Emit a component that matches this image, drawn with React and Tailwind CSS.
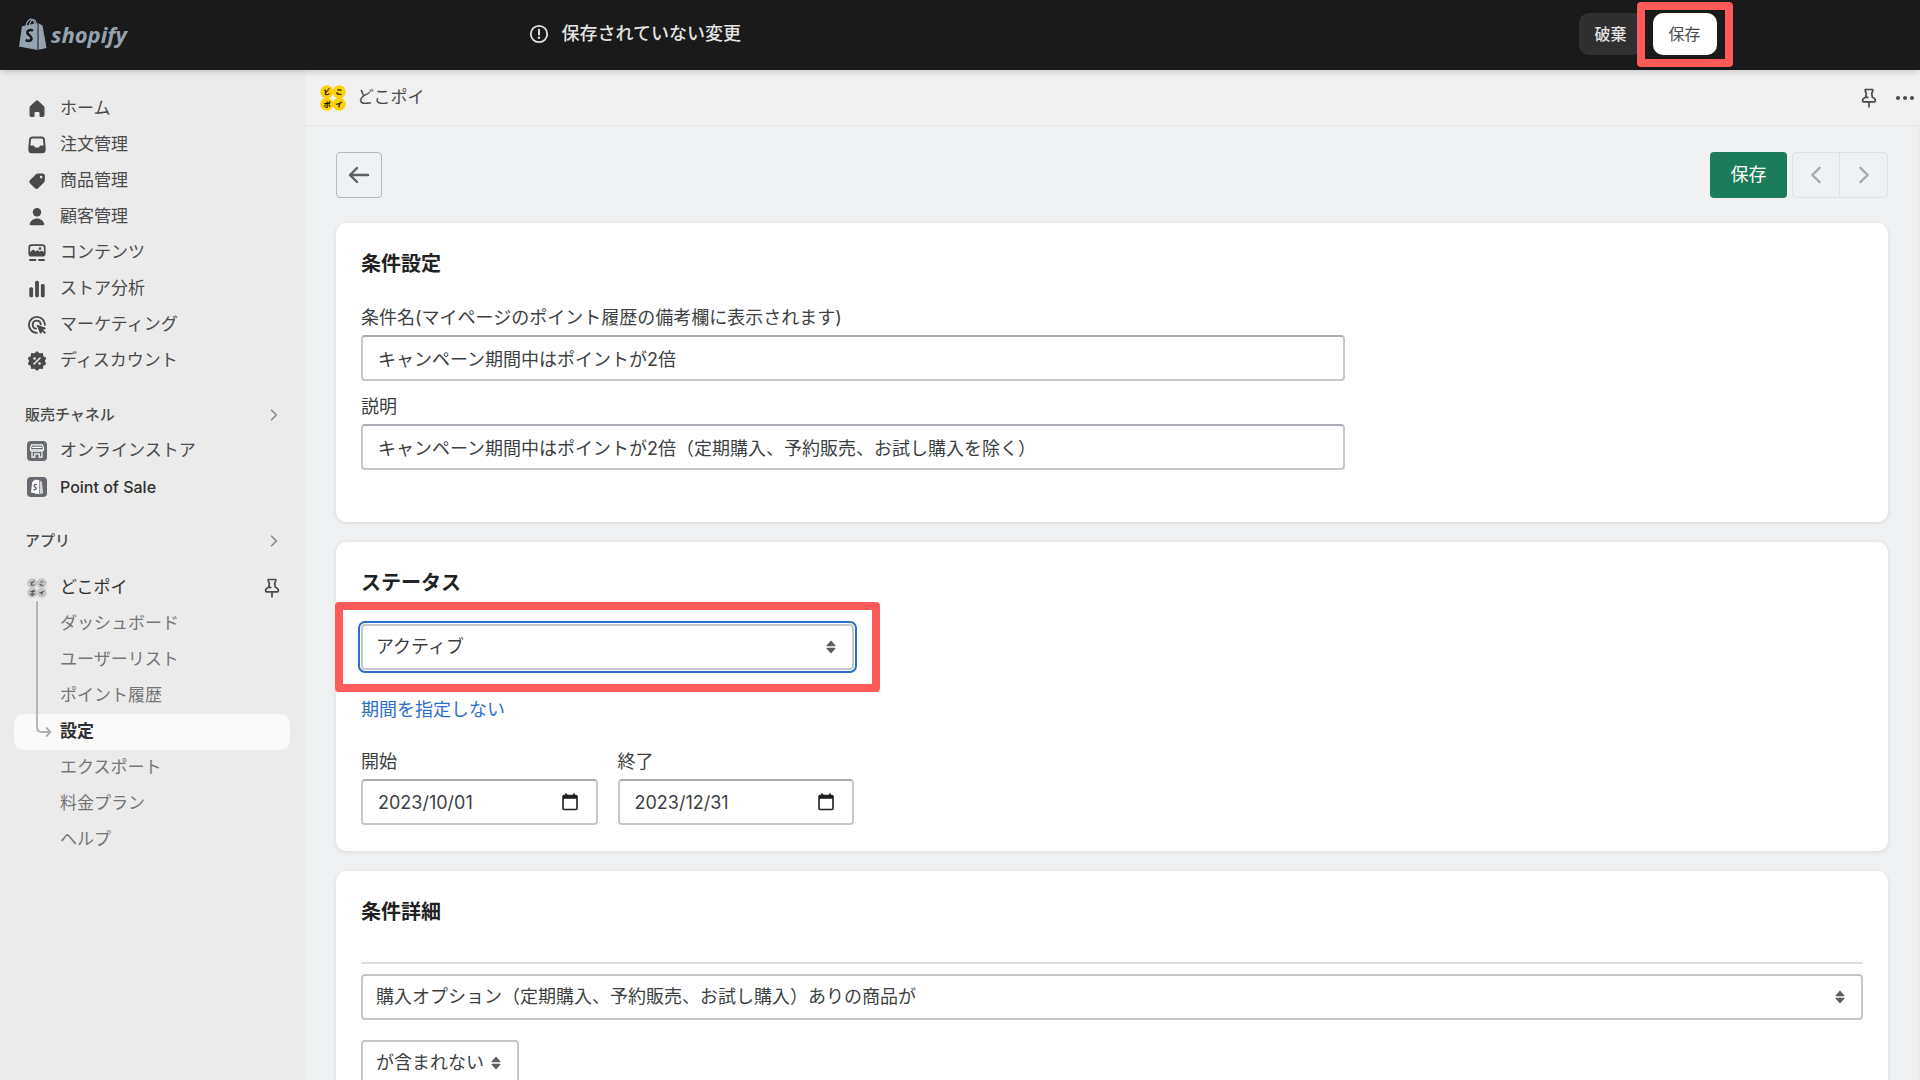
import React, { useState } from "react";

const iconClass = "w-5 h-5 shrink-0 text-[#4a4a4a]";

function HomeIcon() {
    return (
        <svg viewBox="0 0 20 20" className={iconClass} fill="currentColor" aria-hidden="true">
            <path d="M8.700 1.900a1.900 1.900 0 0 1 2.600 0l5.200 4.900a3.200 3.200 0 0 1 1 2.300v6.300a2.600 2.600 0 0 1-2.600 2.600h-1.400a1 1 0 0 1-1-1v-3a1 1 0 0 0-1-1h-3a1 1 0 0 0-1 1v3a1 1 0 0 1-1 1H5.100a2.600 2.600 0 0 1-2.600-2.600V9.100a3.200 3.200 0 0 1 1-2.300z" />
        </svg>
    );
}

function OrderIcon() {
    return (
        <svg viewBox="0 0 20 20" className={iconClass} fill="currentColor" aria-hidden="true">
            <path fillRule="evenodd" d="M5 1.600h10a3 3 0 0 1 2.900 2.500l.7 8V15a3.200 3.200 0 0 1-3.200 3.200H4.600A3.200 3.200 0 0 1 1.400 15v-2.900l.7-8A3 3 0 0 1 5 1.600zm.3 1.900a1.300 1.300 0 0 0-1.300 1.200L3.400 10.400h2.800c.5 0 .9.300 1.100.7l.4.900c.2.400.5.600.9.600h2.800c.4 0 .7-.2.900-.6l.4-.9c.2-.4.6-.7 1.100-.7h2.800L16 4.700a1.300 1.300 0 0 0-1.300-1.200z" />
        </svg>
    );
}

function TagIcon() {
    return (
        <svg viewBox="0 0 20 20" className={iconClass} fill="currentColor" aria-hidden="true">
            <path fillRule="evenodd" d="M11.200 2.500h4A2.600 2.600 0 0 1 17.900 5.100v4a3.400 3.400 0 0 1-1 2.400l-5.500 5.500a2.600 2.600 0 0 1-3.700 0l-4.600-4.600a2.400 2.400 0 0 1 0-3.500l5.600-5.400a3.400 3.400 0 0 1 2.500-1zm3 4.900a1.300 1.300 0 1 0 0-2.600 1.300 1.300 0 0 0 0 2.600z" />
        </svg>
    );
}

function PersonIcon() {
    return (
        <svg viewBox="0 0 20 20" className={iconClass} fill="currentColor" aria-hidden="true">
            <circle cx="10" cy="5.300" r="4.200" />
            <path d="M3.600 18.200c-.6 0-1-.5-.9-1.100C3.300 13.700 6.300 11.400 10 11.400s6.700 2.300 7.300 5.700c.1.600-.3 1.100-.9 1.100z" />
        </svg>
    );
}

function ContentIcon() {
    return (
        <svg viewBox="0 0 20 20" className={iconClass} fill="currentColor" aria-hidden="true">
            <path fillRule="evenodd" d="M4.600 1.200h10.800A3.200 3.200 0 0 1 18.600 4.400v6A3.200 3.200 0 0 1 15.400 13.600H4.600A3.200 3.200 0 0 1 1.400 10.400v-6A3.200 3.200 0 0 1 4.600 1.200zm.2 1.700a1.700 1.700 0 0 0-1.700 1.700v4.700l2.300-2.200c.5-.5 1.200-.5 1.700 0l1.500 1.500 1-.9c.6-.5 1.400-.5 1.900 0l1.200 1.100 1-.8c.5-.4 1.200-.4 1.700 0l1.500 1.300V4.600a1.700 1.700 0 0 0-1.700-1.700zm8.200 1.300a1.400 1.400 0 1 1 0 2.800 1.400 1.400 0 0 1 0-2.800z" />
            <rect x="2" y="16" width="7.500" height="2" rx="1" />
            <rect x="11" y="16" width="7" height="2" rx="1" />
        </svg>
    );
}

function AnalyticsIcon() {
    return (
        <svg viewBox="0 0 20 20" className={iconClass} fill="currentColor" aria-hidden="true">
            <rect x="2.300" y="8.300" width="3.800" height="10" rx="1.500" />
            <rect x="8.100" y="1.700" width="3.800" height="16.600" rx="1.500" />
            <rect x="13.900" y="5" width="3.800" height="13.300" rx="1.500" />
        </svg>
    );
}

function MarketingIcon() {
    return (
        <svg viewBox="0 0 20 20" className={iconClass} fill="none" stroke="currentColor" strokeWidth="1.900" strokeLinecap="round" aria-hidden="true">
            <path d="M17.900 9.800A8 8 0 1 0 9.800 17.900" />
            <path d="M13.700 9.300A4 4 0 1 0 9 13.600" />
            <path d="M10.200 10.200l8.800 3-3.200 1.300 3.200 3.200-1.300 1.300-3.200-3.200-1.300 3.200z" fill="currentColor" stroke="none" />
            <path d="M10.400 10.400l8 2.900-3 1.400-1.200 3.200z" fill="currentColor" strokeWidth="1" strokeLinejoin="round" />
        </svg>
    );
}

function DiscountIcon() {
    return (
        <svg viewBox="0 0 20 20" className={iconClass} aria-hidden="true">
            <path fill="currentColor" stroke="currentColor" strokeWidth="1.600" strokeLinejoin="round" d="M10 1.200l2.200 2 3-.4.400 2.900 2.700 1.400-1.300 2.900 1.300 2.900-2.700 1.400-.4 2.900-3-.4-2.200 2-2.200-2-3 .4-.4-2.900-2.700-1.400L3 10 1.700 7.100l2.700-1.400.4-2.900 3 .4z" />
            <path d="M7 13l6-6" stroke="#ebebeb" strokeWidth="1.600" strokeLinecap="round" />
            <circle cx="7.500" cy="7.500" r="1.300" fill="#ebebeb" />
            <circle cx="12.500" cy="12.500" r="1.300" fill="#ebebeb" />
        </svg>
    );
}

function StoreIcon() {
    return (
        <svg viewBox="0 0 20 20" className={iconClass} aria-hidden="true">
            <rect width="20" height="20" rx="4" fill="#66696d" />
            <path d="M4.500 3.800h11l1 3.600v1.400H3.500V7.400z" fill="none" stroke="#fff" strokeWidth="1.200" strokeLinejoin="round" />
            <path d="M5.200 6.300h9.600M3.800 9.200c0 1.600 2.900 1.600 3.100 0 .2 1.600 2.900 1.600 3.100 0 .2 1.600 2.900 1.600 3.100 0 .2 1.600 3.100 1.600 3.100 0M5 11.200v4.900h2.800v-3.200h4.400v3.200H15v-4.900" fill="none" stroke="#fff" strokeWidth="1.200" />
        </svg>
    );
}

function PosIcon() {
    return (
        <svg viewBox="0 0 20 20" className={iconClass} aria-hidden="true">
            <rect width="20" height="20" rx="4" fill="#66696d" />
            <path d="M5.200 5.200C7 2.800 8.500 2.600 10 2.800l2.300.4v14L4 15.600z" fill="#fff" />
            <path d="M13 3.500l1.900 1.500 1.300 11.200-3.200.9z" fill="#d5d6d8" />
            <path d="M10.100 7.700c-1.900-.8-3.200.2-2.900 1.300.3 1.200 2 1.200 2 2.600 0 1.200-1.500 1.500-2.700.6" fill="none" stroke="#66696d" strokeWidth="1.400" />
        </svg>
    );
}

function ChevronIcon({ left, className }) {
    return (
        <svg viewBox="0 0 20 20" className={className} fill="none" stroke="currentColor" strokeWidth="2" strokeLinecap="round" strokeLinejoin="round" aria-hidden="true">
            <path d={left ? "M13 4l-6 6 6 6" : "M7 4l6 6-6 6"} />
        </svg>
    );
}

function PinIcon() {
    return (
        <svg viewBox="0 0 20 20" className="w-5 h-5 shrink-0 text-[#4a4a4a]" fill="none" stroke="currentColor" strokeWidth="1.700" strokeLinecap="round" strokeLinejoin="round" aria-hidden="true">
            <path d="M6.200 1.500h7.600M6.400 1.600v2.200c0 .5.900.8.900 1.500L6.700 9.200c-1.900.6-3.100 1.700-3.100 3.500 0 .8.400 1.100 1.100 1.100h10.600c.7 0 1.100-.3 1.100-1.100 0-1.800-1.200-2.900-3.100-3.500l-.6-3.900c0-.7.900-1 .9-1.500V1.600M10 14v4.800M6.700 9.400h2" />
        </svg>
    );
}

// Quatre jetons avec les lettres de l'application
function DokopoiLogo({ gray, className }) {
    const fill = gray ? "#c6c6c6" : "#fdd008";
    const ink = gray ? "#444" : "#1c1503";
    return (
        <svg viewBox="0 0 26 26" className={className} aria-hidden="true">
            <circle cx="6.800" cy="6.800" r="6.500" fill={fill} />
            <circle cx="19.200" cy="6.800" r="6.500" fill={fill} />
            <circle cx="6.800" cy="19.200" r="6.500" fill={fill} />
            <circle cx="19.200" cy="19.200" r="6.500" fill={fill} />
            <g fill={ink} fontSize="7" fontWeight="900" textAnchor="middle">
                <text x="7" y="9.500" transform="rotate(-12 7 7)">ど</text>
                <text x="19" y="9.500" transform="rotate(8 19 7)">こ</text>
                <text x="7" y="22">ポ</text>
                <text x="19" y="22" transform="rotate(8 19 19)">イ</text>
            </g>
        </svg>
    );
}

function ShopifyLogo() {
    return (
        <a href="#home" aria-label="shopify" className="flex items-center gap-1 text-[#95a3b1]">
            <svg viewBox="0 0 28 32" className="w-7 h-8" aria-hidden="true">
                <path d="M3 8.300L18.500 5v27L0 28.500z" fill="currentColor" />
                <path d="M19.500 5.300l4 2.200L27.500 30l-8 1.800z" fill="currentColor" />
                <path d="M7 8c.5-3.800 2.800-6.800 5-6.800 2.400 0 3.300 2.400 3.500 5M10.500 7c.5-3 2-5.200 3.700-5.200 1.800 0 2.800 1.500 3.200 4" fill="none" stroke="currentColor" strokeWidth="1.200" />
                <path d="M14 12.600c-3.400-1.500-6 .3-5.500 2.500.5 2.100 4 2.400 4 5.200 0 2.800-3 3.300-5.800 1.500" fill="none" stroke="#1a1a1a" strokeWidth="2.600" />
            </svg>
            <span className="font-['Open_Sans'] text-[22px] font-bold italic leading-8">shopify</span>
        </a>
    );
}

const mainLinks = [
    { label: "ホーム", Icon: HomeIcon },
    { label: "注文管理", Icon: OrderIcon },
    { label: "商品管理", Icon: TagIcon },
    { label: "顧客管理", Icon: PersonIcon },
    { label: "コンテンツ", Icon: ContentIcon },
    { label: "ストア分析", Icon: AnalyticsIcon },
    { label: "マーケティング", Icon: MarketingIcon },
    { label: "ディスカウント", Icon: DiscountIcon },
];

const channelLinks = [
    { label: "オンラインストア", Icon: StoreIcon },
    { label: "Point of Sale", Icon: PosIcon, latin: true },
];

const appLinks = ["ダッシュボード", "ユーザーリスト", "ポイント履歴", "設定", "エクスポート", "料金プラン", "ヘルプ"];

function NavLink({ label, Icon, latin }) {
    return (
        <li>
            <a href="#nav" className="flex items-center gap-[13px] h-9 pl-[13px]">
                <Icon />
                <span className={latin ? "text-base font-medium text-[#303030]" : "text-[17px]"}>{label}</span>
            </a>
        </li>
    );
}

function SectionTitle({ children }) {
    return (
        <button type="button" className="flex items-center justify-between w-full h-9 mt-[18px] pl-[11px] pr-2 text-[15px] font-medium">
            {children}
            <ChevronIcon className="w-4 h-4 text-[#8a8a8a]" />
        </button>
    );
}

function Sidebar() {
    return (
        <nav className="w-[305px] shrink-0 bg-[#ebebeb] pl-[14px] pr-[15px] pt-[21px] text-[#4a4a4a]">
            <ul>
                {mainLinks.map((link) => <NavLink key={link.label} {...link} />)}
            </ul>

            <SectionTitle>販売チャネル</SectionTitle>
            <ul>
                {channelLinks.map((link) => <NavLink key={link.label} {...link} />)}
            </ul>

            <SectionTitle>アプリ</SectionTitle>
            <div className="relative mt-[11px]">
                <div className="flex items-center h-9 pl-[13px] pr-2">
                    <a href="#app" className="flex flex-1 items-center gap-[13px]">
                        <DokopoiLogo gray className="w-5 h-5 shrink-0" />
                        <span className="text-[17px] text-[#303030]">どこポイ</span>
                    </a>
                    <button type="button" aria-label="固定"><PinIcon /></button>
                </div>
                <ul>
                    {appLinks.map((label) => (
                        <li key={label}>
                            <a
                                href="#app"
                                className={
                                    label === "設定"
                                        ? "flex items-center h-9 pl-[46px] rounded-[10px] bg-[#fafafa] text-[17px] font-bold text-[#303030]"
                                        : "flex items-center h-9 pl-[46px] text-[17px] text-[#757575]"
                                }
                            >
                                {label}
                            </a>
                        </li>
                    ))}
                </ul>
                {/* Ligne qui relie l'application à la page active */}
                <svg viewBox="0 0 16 138" className="absolute left-[22px] top-[31px] w-4 h-[138px] text-[#b0b0b0]" fill="none" stroke="currentColor" strokeWidth="1.800" strokeLinecap="round" strokeLinejoin="round" aria-hidden="true">
                    <path d="M1 1v125c0 3.500 1.500 5 4.500 5H14M10.500 127l4 4-4 4" />
                </svg>
            </div>
        </nav>
    );
}

function TopBar() {
    return (
        <header className="relative z-10 flex items-center h-[70px] pb-[2px] shrink-0 bg-[#1a1a1a] shadow-md">
            <div className="w-[325px] shrink-0 pl-[19px]">
                <ShopifyLogo />
            </div>
            <div className="flex flex-1 justify-center">
                <div className="flex items-center w-full max-w-[1188px]">
                    <svg viewBox="0 0 20 20" className="w-5 h-5 text-[#e3e3e3]" fill="none" stroke="currentColor" strokeWidth="1.800" strokeLinecap="round" aria-hidden="true">
                        <circle cx="10" cy="10" r="8.200" />
                        <path d="M10 5.800v4.800" strokeWidth="2" />
                        <circle cx="10" cy="13.800" r="1.200" fill="currentColor" stroke="none" />
                    </svg>
                    <p className="flex-1 pl-[13px] text-lg font-medium text-[#e3e3e3]">保存されていない変更</p>
                    <div className="flex gap-[10px]">
                        <button type="button" className="w-16 h-[42px] rounded-[10px] bg-[#303030] text-base font-medium text-[#e3e3e3]">破棄</button>
                        <div className="relative">
                            <button type="button" className="block w-16 h-[42px] rounded-[10px] bg-white text-base text-[#4a4a4a]">保存</button>
                            <div className="absolute -inset-x-4 -top-[11px] -bottom-3 rounded-[4px] border-8 border-[#ff5a5a] pointer-events-none"></div>
                        </div>
                    </div>
                </div>
            </div>
        </header>
    );
}

function Card({ title, children, className }) {
    return (
        <section className={"mb-5 rounded-[10px] bg-white px-[25px] pt-[25px] shadow-[0_1px_4px_rgba(23,24,24,0.12)] " + className}>
            <h2 className="text-xl leading-8 font-semibold text-[#202223]">{title}</h2>
            {children}
        </section>
    );
}

const fieldClass = "block w-full h-[46px] rounded-[4px] border-2 border-[#c4c8cd] border-t-[#a9adb3] bg-white px-[15px] text-lg text-[#3c3f42]";

function TextField({ id, label, value, onChange }) {
    return (
        <div>
            <label htmlFor={id} className="block mb-[3px] text-lg leading-7">{label}</label>
            <input id={id} type="text" value={value} onChange={(e) => onChange(e.target.value)} className={fieldClass} />
        </div>
    );
}

function DateField({ id, label, value, onChange }) {
    return (
        <div className="relative flex-1">
            <TextField id={id} label={label} value={value} onChange={onChange} />
            <svg viewBox="0 0 16 18" className="absolute right-5 bottom-[14px] w-4 h-[18px] text-[#202020]" fill="none" stroke="currentColor" aria-hidden="true">
                <rect x="1" y="2.500" width="14" height="14" rx="1" strokeWidth="1.600" />
                <path d="M1 4h14" strokeWidth="3.600" />
                <path d="M4 .5v3M12 .5v3" strokeWidth="2" />
            </svg>
        </div>
    );
}

function SelectField({ label, options, focused, className }) {
    return (
        <div className={"relative " + className}>
            <select
                aria-label={label}
                className={"appearance-none block w-full h-[46px] rounded-[4px] border-2 border-[#c4c8cd] bg-white pl-[13px] pr-8 text-lg text-[#3c3f42] " + (focused ? "outline-2 outline-offset-1 outline-[#2c6ecb]" : "")}
            >
                {options.map((option) => <option key={option}>{option}</option>)}
            </select>
            <svg viewBox="0 0 10 14" className="absolute right-[18px] top-4 w-[10px] h-[14px] pointer-events-none text-[#5c5f62]" fill="currentColor" aria-hidden="true">
                <path d="M5 .5l4.300 4.700c.4.500.1 1-.5 1H1.200c-.6 0-.9-.5-.5-1zM5 13.500l4.300-4.700c.4-.5.100-1-.5-1H1.200c-.6 0-.9.500-.5 1z" />
            </svg>
        </div>
    );
}

function App() {
    const [name, setName] = useState("キャンペーン期間中はポイントが2倍");
    const [description, setDescription] = useState("キャンペーン期間中はポイントが2倍（定期購入、予約販売、お試し購入を除く）");
    const [start, setStart] = useState("2023/10/01");
    const [end, setEnd] = useState("2023/12/31");

    return (
        <div lang="ja" className="flex flex-col h-screen overflow-hidden font-[Inter,'Noto_Sans_CJK_JP',sans-serif]">
            <TopBar />
            <div className="flex flex-1 min-h-0">
                <Sidebar />

                <div className="flex flex-col flex-1 min-w-0">
                    <div className="flex items-center h-14 shrink-0 pl-[15px] pr-[5px] bg-[#f1f1f1] border-b border-[#e6e7e9] text-[#4a4a4a]">
                        <DokopoiLogo className="w-[26px] h-[26px]" />
                        <h1 className="flex-1 pl-[11px] text-[17px]">どこポイ</h1>
                        <button type="button" aria-label="固定"><PinIcon /></button>
                        <button type="button" aria-label="その他" className="ml-4">
                            <svg viewBox="0 0 20 20" className="w-5 h-5" fill="currentColor" aria-hidden="true">
                                <circle cx="3" cy="10" r="2" />
                                <circle cx="10" cy="10" r="2" />
                                <circle cx="17" cy="10" r="2" />
                            </svg>
                        </button>
                    </div>

                    <main className="flex-1 min-h-0 overflow-y-auto [scrollbar-width:none] bg-[#f0f1f3] border-r-2 border-[#ebebeb] pl-[31px] pr-[30px] pt-[26px] text-[#3c3f42]">
                        <div className="flex items-center mb-[25px]">
                            <button type="button" aria-label="戻る" className="flex items-center justify-center w-[46px] h-[46px] rounded-[4px] border border-[#b4b9c0]">
                                <svg viewBox="0 0 22 20" className="w-[22px] h-5 text-[#5c5f66]" fill="none" stroke="currentColor" strokeWidth="2.400" strokeLinecap="round" strokeLinejoin="round" aria-hidden="true">
                                    <path d="M20 10H2M9 3l-7 7 7 7" />
                                </svg>
                            </button>
                            <button type="button" className="ml-auto w-[77px] h-[46px] rounded-[4px] bg-[#1b7b5b] text-lg text-white">保存</button>
                            <div className="flex ml-[5px] h-[46px] rounded-[4px] border border-[#dfe1e4] text-[#a5abb3]">
                                <button type="button" aria-label="前へ" className="flex items-center justify-center w-[47px] border-r border-[#dfe1e4]">
                                    <ChevronIcon left className="w-6 h-6" />
                                </button>
                                <button type="button" aria-label="次へ" className="flex items-center justify-center w-[47px]">
                                    <ChevronIcon className="w-6 h-6" />
                                </button>
                            </div>
                        </div>

                        <Card title="条件設定" className="pb-[52px]">
                            <div className="flex flex-col gap-3 w-full max-w-[984px] mt-6">
                                <TextField id="name" label="条件名(マイページのポイント履歴の備考欄に表示されます)" value={name} onChange={setName} />
                                <TextField id="description" label="説明" value={description} onChange={setDescription} />
                            </div>
                        </Card>

                        <Card title="ステータス" className="pb-[26px]">
                            <div className="relative w-full max-w-[493px] mt-[25px]">
                                <SelectField label="ステータス" options={["アクティブ", "下書き"]} focused className="w-full" />
                                <div className="absolute -inset-x-[26px] -inset-y-[22px] rounded-[4px] border-8 border-[#ff5a5a] pointer-events-none"></div>
                            </div>
                            <a href="#period" className="block w-fit mt-[26px] text-lg leading-7 text-[#2c6ecb]">期間を指定しない</a>
                            <div className="flex gap-5 w-full max-w-[493px] mt-6">
                                <DateField id="start" label="開始" value={start} onChange={setStart} />
                                <DateField id="end" label="終了" value={end} onChange={setEnd} />
                            </div>
                        </Card>

                        <Card title="条件詳細" className="pb-[25px]">
                            <hr className="mt-[34px] mb-[10px] border-t-2 border-[#dcdee1]" />
                            <SelectField label="条件" options={["購入オプション（定期購入、予約販売、お試し購入）ありの商品が"]} className="w-full" />
                            <SelectField label="判定" options={["が含まれない", "が含まれる"]} className="w-[158px] mt-5" />
                        </Card>
                    </main>
                </div>
            </div>
        </div>
    );
}

export default App;
